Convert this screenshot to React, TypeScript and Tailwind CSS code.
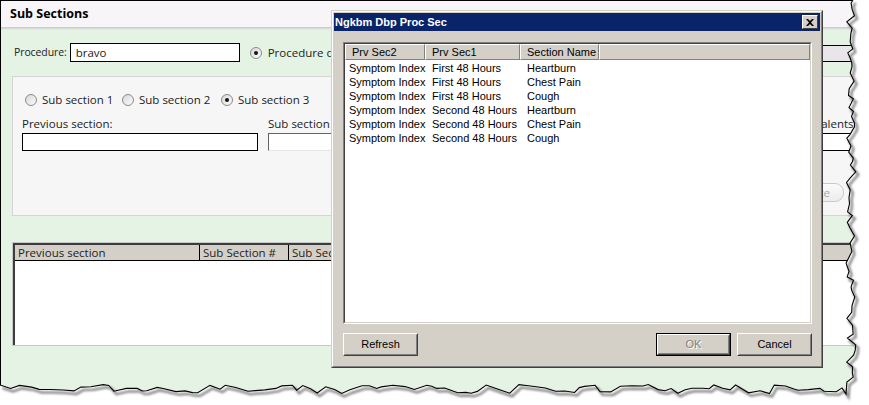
import React from "react";

function mulberry32(a: number) {
  return function () {
    a |= 0;
    a = (a + 0x6d2b79f5) | 0;
    let t = Math.imul(a ^ (a >>> 15), 1 | a);
    t = (t + Math.imul(t ^ (t >>> 7), 61 | t)) ^ t;
    return ((t ^ (t >>> 14)) >>> 0) / 4294967296;
  };
}

const rnd = mulberry32(11);
const pts: [number, number][] = [];
{
  let y = 0;
  pts.push([853, 0]);
  y = 3;
  while (y < 388) {
    pts.push([851 + (rnd() * 10 - 5), y]);
    y += 3 + rnd() * 6;
  }
  pts.push([846, 394]);
  let x = 842;
  while (x > 2) {
    pts.push([x, 389 + (rnd() * 9 - 4.5)]);
    x -= 4 + rnd() * 9;
  }
  pts.push([0, 385]);
}
const edge = "M" + pts.map((p) => `${p[0].toFixed(1)} ${p[1].toFixed(1)}`).join(" L");
const fill = edge + " L0 405 L869 405 L869 0 Z";

const Radio = ({ checked }: { checked?: boolean }) => (
  <span className="inline-flex w-[12px] h-[12px] shrink-0 rounded-full border border-[#8a8a8a] bg-gradient-to-br from-[#d8d8d8] to-[#fbfbfb] items-center justify-center">
    {checked && <span className="w-[4px] h-[4px] rounded-full bg-[#151515]" />}
  </span>
);

const WinButton = ({ children, def, disabled }: { children: React.ReactNode; def?: boolean; disabled?: boolean }) => (
  <div className={`w-[75px] h-[23px] ${def ? "border border-black" : ""}`}>
    <div className="w-full h-full border border-t-white border-l-white border-r-[#404040] border-b-[#404040]">
      <div className="w-full h-full border border-t-[#d4d0c8] border-l-[#d4d0c8] border-r-[#808080] border-b-[#808080] flex items-center justify-center">
        {disabled ? (
          <span className="text-[#808080] [text-shadow:1px_1px_0_#fff]">{children}</span>
        ) : (
          <span className="text-black">{children}</span>
        )}
      </div>
    </div>
  </div>
);

const rows = [
  ["Symptom Index", "First 48 Hours", "Heartburn"],
  ["Symptom Index", "First 48 Hours", "Chest Pain"],
  ["Symptom Index", "First 48 Hours", "Cough"],
  ["Symptom Index", "Second 48 Hours", "Heartburn"],
  ["Symptom Index", "Second 48 Hours", "Chest Pain"],
  ["Symptom Index", "Second 48 Hours", "Cough"],
];

const HeadCell = ({ w, children }: { w: string; children?: React.ReactNode }) => (
  <div className={`${w} h-full border border-t-white border-l-white border-r-[#808080] border-b-[#808080] flex items-center pl-[6px]`}>
    {children}
  </div>
);

export default function App() {
  return (
    <div className="relative w-[869px] h-[405px] bg-white overflow-hidden font-['Open_Sans',sans-serif] text-[#222]">
      <div className="w-[869px] h-[405px] border-l border-t border-black flex flex-col">
        <div className="h-[26px] bg-[#f8f5f8] flex items-center pl-[9px]">
          <span className="font-bold text-[12.5px] text-black">Sub Sections</span>
        </div>
        <div className="h-[3px] bg-gradient-to-b from-[#c9c5c9] to-[#e4f3e4]" />
        <div className="flex-1 bg-[#e4f3e4] pl-[11px] flex flex-col text-[11.5px]">
          {/* procedure row */}
          <div className="mt-[13px] h-[19px] flex items-start">
            <span className="h-[19px] flex items-center pl-[2px] shrink-0 whitespace-nowrap text-[10.5px] tracking-[-0.1px]">Procedure:</span>
            <div className="ml-[3px] w-[170px] h-[19px] border border-black bg-white flex items-center pl-[5px]">bravo</div>
            <div className="h-[19px] flex items-center ml-[10px] gap-[6px] whitespace-nowrap">
              <Radio checked />
              <span className="w-[63px] overflow-hidden">Procedure description</span>
            </div>
            <div className="ml-auto mt-[2px] w-[250px] h-[17px] border-y border-black bg-[#e9e5ea]" />
          </div>
          {/* panel */}
          <div className="mt-[14px] w-[850px] h-[140px] border border-[#d4d4d4] bg-[#f6f6f6] flex flex-col pl-[9px]">
            <div className="mt-[16px] h-[14px] flex items-center pl-[3px]">
              <div className="w-[97px] flex items-center gap-[5px]"><Radio /><span>Sub section 1</span></div>
              <div className="w-[99px] flex items-center gap-[5px]"><Radio /><span>Sub section 2</span></div>
              <div className="flex items-center gap-[5px]"><Radio checked /><span>Sub section 3</span></div>
            </div>
            <div className="mt-[9px] flex">
              <div className="w-[246px] flex flex-col gap-[2px]">
                <span className="h-[15px] leading-[15px]">Previous section:</span>
                <div className="w-[236px] h-[18px] border border-black bg-white" />
              </div>
              <div className="w-[270px] flex flex-col gap-[2px]">
                <span className="h-[15px] leading-[15px]">Sub section #:</span>
                <div className="w-[200px] h-[18px] border border-t-[#646464] border-l-[#646464] border-r-[#e6e6e6] border-b-[#e6e6e6] bg-white" />
              </div>
              <div className="flex-1 flex flex-col gap-[2px] pl-[254px]">
                <span className="h-[15px] leading-[15px] whitespace-nowrap">Equivalents:</span>
                <div className="h-[18px] -ml-[20px] border border-black bg-white" />
              </div>
            </div>
            <div className="mt-[32px] flex justify-end pr-[17px]">
              <div className="w-[64px] h-[19px] rounded-[9px] border border-[#c9c9c9] bg-gradient-to-b from-[#fbfbfb] to-[#ececec] flex items-center justify-end pr-[13px] text-[#a8a8a8]">
                Update
              </div>
            </div>
          </div>
          {/* list */}
          <div className="mt-[26px] w-[850px] h-[104px] border border-[#c8c8c8]">
            <div className="w-full h-full border-l-2 border-t-2 border-[#3c3c3c] bg-white flex flex-col">
              <div className="h-[16px] bg-[#d4d0c8] border-b border-black flex text-[11.5px]">
                <div className="w-[185px] border-r border-black pl-[3px] leading-[15px]">Previous section</div>
                <div className="w-[89px] border-r border-black pl-[3px] leading-[15px]">Sub Section #</div>
                <div className="w-[180px] border-r border-black pl-[3px] leading-[15px]">Sub Section Name</div>
                <div className="flex-1 pl-[3px] leading-[15px]">Equivalents</div>
              </div>
            </div>
          </div>
        </div>
      </div>

      {/* dialog window */}
      <div className="absolute left-[331px] top-[10px] w-[492px] h-[358px] bg-[#d4d0c8] border border-t-[#d4d0c8] border-l-[#d4d0c8] border-r-[#404040] border-b-[#404040] font-['Liberation_Sans',sans-serif] text-[11px] text-black">
        <div className="w-full h-full border border-t-white border-l-white border-r-[#808080] border-b-[#808080] p-[1px] flex flex-col">
          <div className="h-[18px] bg-[#0a246a] flex items-center pl-[1px] pr-[2px]">
            <span className="text-white font-bold text-[11px]">Ngkbm Dbp Proc Sec</span>
            <div className="ml-auto w-[16px] h-[14px] bg-[#d4d0c8] border border-t-white border-l-white border-r-[#404040] border-b-[#404040] flex items-center justify-center">
              <svg width="8" height="7" viewBox="0 0 8 7">
                <path d="M0 0 L2 0 L4 2 L6 0 L8 0 L5 3.5 L8 7 L6 7 L4 5 L2 7 L0 7 L3 3.5 Z" fill="#000" />
              </svg>
            </div>
          </div>
          <div className="flex-1 pl-[9px] pr-[8px] pt-[11px] pb-[9px] flex flex-col">
            <div className="flex-1 border border-t-[#808080] border-l-[#808080] border-r-white border-b-white">
              <div className="w-full h-full border border-t-[#404040] border-l-[#404040] border-r-[#d4d0c8] border-b-[#d4d0c8] bg-white flex flex-col">
                <div className="h-[16px] bg-[#d4d0c8] flex">
                  <HeadCell w="w-[80px]">Prv Sec2</HeadCell>
                  <HeadCell w="w-[95px]">Prv Sec1</HeadCell>
                  <HeadCell w="w-[79px]">Section Name</HeadCell>
                  <HeadCell w="flex-1" />
                </div>
                <div className="pt-[1px] flex flex-col">
                  {rows.map((r, i) => (
                    <div key={i} className="h-[14px] flex items-center leading-[14px]">
                      <span className="w-[80px] pl-[4px] whitespace-nowrap">{r[0]}</span>
                      <span className="w-[95px] pl-[7px] whitespace-nowrap">{r[1]}</span>
                      <span className="pl-[7px] whitespace-nowrap">{r[2]}</span>
                    </div>
                  ))}
                </div>
              </div>
            </div>
            <div className="mt-[9px] flex items-center">
              <WinButton>Refresh</WinButton>
              <div className="ml-auto flex gap-[6px]">
                <WinButton def disabled>OK</WinButton>
                <WinButton>Cancel</WinButton>
              </div>
            </div>
          </div>
        </div>
      </div>

      {/* torn edge */}
      <svg className="absolute left-0 top-0" width="869" height="405" viewBox="0 0 869 405">
        <defs>
          <filter id="blur" x="-5%" y="-5%" width="110%" height="110%">
            <feGaussianBlur stdDeviation="1.2" />
          </filter>
        </defs>
        <path d={fill} fill="#fff" />
        <path d={edge} fill="none" stroke="#8a8a8a" strokeWidth="2.5" transform="translate(2.5 3)" filter="url(#blur)" />
        <path d={edge} fill="none" stroke="#000" strokeWidth="1.1" />
      </svg>
    </div>
  );
}
